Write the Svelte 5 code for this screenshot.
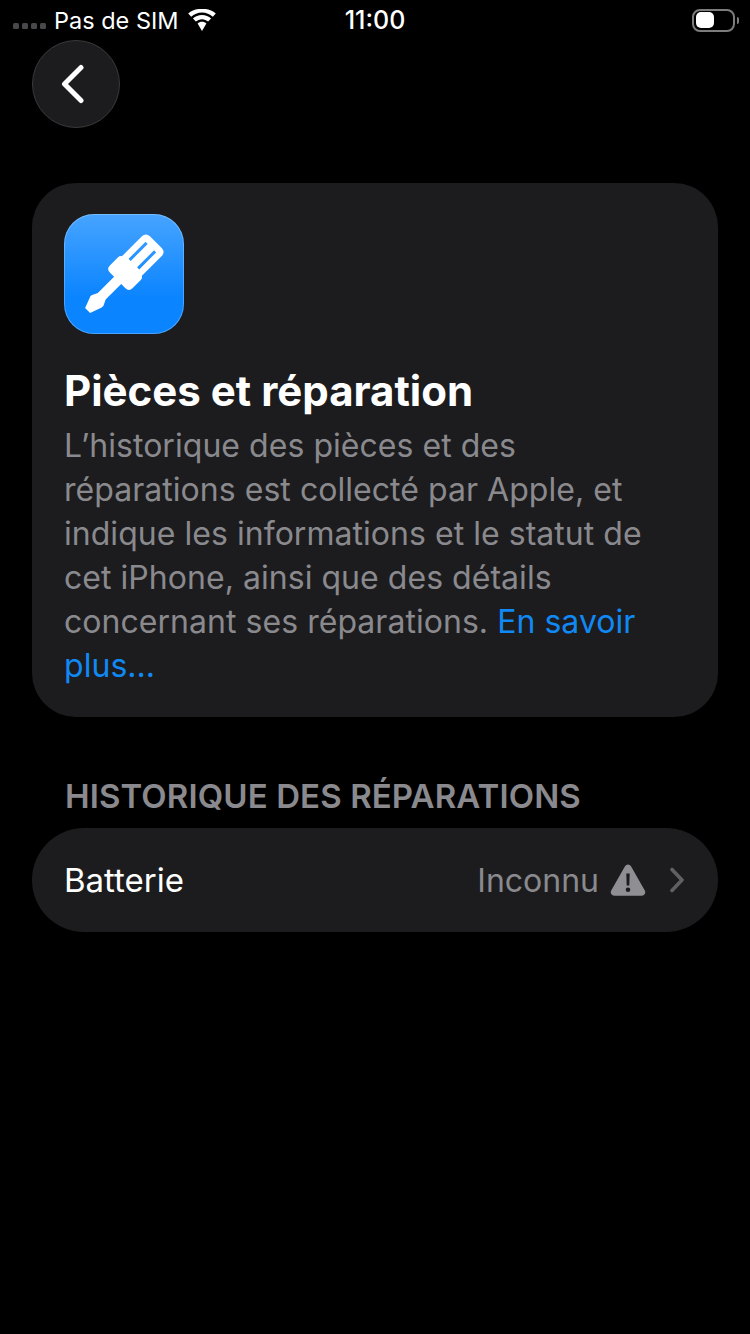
<script>
  const paragraph = "L’historique des pièces et des réparations est collecté par Apple, et indique les informations et le statut de cet iPhone, ainsi que des détails concernant ses réparations.";
</script>

<div class="screen">
  <div class="status">
    <div class="status-left">
      <div class="signal"><i></i><i></i><i></i><i></i></div>
      <span>Pas de SIM</span>
      <svg class="wifi" width="30" height="22" viewBox="0 0 30 22" aria-hidden="true">
        <path d="M15 3.400c4.200 0 8 1.600 10.800 4.300l3-3.100C25.200 1.100 20.300 -.2 15 -.2S4.800 1.100 1.200 4.600l3 3.100C7 5 10.800 3.400 15 3.400z" fill="#fff"/>
        <path d="M15 10.200c2.400 0 4.500.9 6.100 2.400l3-3.100C21.700 7.200 18.500 6 15 6S8.300 7.200 5.900 9.500l3 3.100c1.600-1.500 3.700-2.400 6.100-2.400z" fill="#fff"/>
        <path d="M15 12.800c-1.800 0-3.200.6-4.400 1.800L15 22l4.400-7.400c-1.200-1.200-2.600-1.800-4.400-1.800z" fill="#fff"/>
      </svg>
    </div>
    <div class="time">11:00</div>
    <div class="battery">
      <div class="battery-body"><div class="battery-level"></div></div>
      <div class="battery-cap"></div>
    </div>
  </div>

  <button class="back" aria-label="Retour">
    <svg width="28" height="40" viewBox="0 0 28 40" aria-hidden="true">
      <path d="M22 3.500L5.500 20L22 36.500" fill="none" stroke="#fff" stroke-width="5" stroke-linecap="round" stroke-linejoin="round"/>
    </svg>
  </button>

  <section class="card">
    <div class="app-icon">
      <svg width="120" height="120" viewBox="0 0 120 120" aria-hidden="true">
        <g transform="rotate(45 60 60) translate(0 3)">
          <path fill="#fff" fill-rule="evenodd" d="M52 12h16q6 0 6 6v28q2 .5 2 3v12q0 5 -5 5h-6v22l3 6v2.500l-4.500 12h-7l-4.500 -12V95l3 -6V66h-6q-5 0 -5 -5V49q0 -2.500 2 -3V18q0 -6 6 -6zM52.500 19v24h3V19zM64.500 19v24h3V19z"/>
        </g>
      </svg>
    </div>
    <h1>Pièces et réparation</h1>
    <p>{paragraph} <a href="#plus">En savoir plus...</a></p>
  </section>

  <h2>HISTORIQUE DES RÉPARATIONS</h2>

  <div class="row">
    <span class="row-label">Batterie</span>
    <span class="row-value">Inconnu</span>
    <svg class="warn" width="36" height="32" viewBox="0 0 36 32" aria-hidden="true">
      <path fill="#8e8e93" fill-rule="evenodd" d="M15 2.200a3.500 3.500 0 0 1 6 0L34.800 26.500A3.500 3.500 0 0 1 31.800 31.700H4.200A3.500 3.500 0 0 1 1.200 26.500zM16.300 9.500h3.400l-.4 12h-2.600zM18 23.500a2.300 2.300 0 1 1 0 4.600a2.300 2.300 0 0 1 0-4.600z"/>
    </svg>
    <svg class="chevron" width="16" height="26" viewBox="0 0 16 26" aria-hidden="true">
      <path d="M3 2.500L13 13L3 23.500" fill="none" stroke="#5f5f64" stroke-width="3.600" stroke-linecap="round" stroke-linejoin="round"/>
    </svg>
  </div>
</div>

<style>
  :global(body) {
    margin: 0;
    background: #000;
  }

  .screen {
    width: 750px;
    height: 1334px;
    background: #000;
    color: #fff;
    font-family: Inter, "Liberation Sans", sans-serif;
    overflow: hidden;
  }

  .status {
    height: 40px;
    display: flex;
    align-items: center;
    justify-content: space-between;
    padding: 0 11px 0 13px;
    font-size: 23.5px;
    position: relative;
  }

  .status-left {
    display: flex;
    align-items: center;
    gap: 8px;
  }

  .signal {
    display: flex;
    gap: 3px;
    margin-top: 12px;
  }

  .signal i {
    width: 6px;
    height: 6px;
    border-radius: 1.500px;
    background: #48484a;
  }

  .time {
    position: absolute;
    left: 0;
    right: 0;
    text-align: center;
    font-size: 25px;
    font-weight: 500;
  }

  .battery {
    display: flex;
    align-items: center;
    gap: 2px;
  }

  .battery-body {
    width: 43px;
    height: 23px;
    border: 2px solid #7c7c7c;
    border-radius: 8px;
    box-sizing: border-box;
    padding: 1.500px;
  }

  .battery-level {
    width: 18px;
    height: 16px;
    border-radius: 5px;
    background: #fff;
  }

  .battery-cap {
    width: 2px;
    height: 7px;
    border-radius: 0 2px 2px 0;
    background: #7c7c7c;
  }

  .back {
    display: flex;
    align-items: center;
    justify-content: center;
    width: 88px;
    height: 88px;
    margin: 0 0 55px 32px;
    padding: 0 6px 0 0;
    border-radius: 50%;
    border: 1px solid #3a3a3c;
    background: #1c1c1e;
  }

  .card {
    margin: 0 32px;
    padding: 31px 32px 29px;
    height: 534px;
    box-sizing: border-box;
    background: #1c1c1e;
    border-radius: 44px;
  }

  .app-icon {
    width: 120px;
    height: 120px;
    border-radius: 30px;
    background: linear-gradient(#47a4ff, #0a84ff 70%);
    box-shadow: inset 0 0 0 1px rgba(255, 255, 255, 0.25);
  }

  .app-icon svg {
    display: block;
  }

  h1 {
    margin: 32px 0 0;
    font-size: 42px;
    line-height: 50px;
    font-weight: 700;
  }

  p {
    margin: 8px 0 0;
    font-size: 32px;
    line-height: 44px;
    letter-spacing: 0.04px;
    color: #8a8a8e;
  }

  a {
    color: #1089f5;
    text-decoration: none;
  }

  h2 {
    margin: 59px 65px 12px;
    font-size: 33px;
    line-height: 40px;
    letter-spacing: 0.1px;
    font-weight: 600;
    color: #8a8a8e;
    white-space: nowrap;
  }

  .row {
    display: flex;
    align-items: center;
    margin: 0 32px;
    height: 104px;
    padding: 0 33px 0 32px;
    box-sizing: border-box;
    background: #1c1c1e;
    border-radius: 52px;
    font-size: 32px;
  }

  .row-label {
    flex: 1;
    font-size: 33px;
  }

  .row-value {
    color: #8a8a8e;
  }

  .warn {
    margin-left: 11px;
  }

  .chevron {
    margin-left: 23px;
  }
</style>
